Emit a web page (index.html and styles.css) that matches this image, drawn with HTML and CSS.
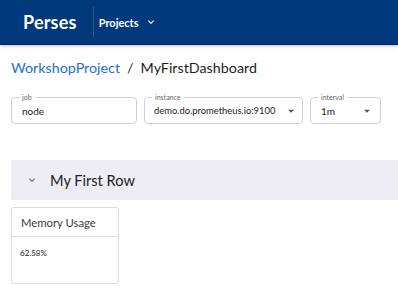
FILE: index.html
```html
<!DOCTYPE html>
<html>
<head>
<meta charset="utf-8">
<link rel="stylesheet" href="styles.css">
</head>
<body>
<header class="topbar">
  <div class="brand">Perses</div>
  <div class="divider"></div>
  <div class="projects">Projects
    <svg class="chev" viewBox="0 0 24 24" width="12" height="12"><path d="M7.41 8.59 12 13.17l4.59-4.58L18 10l-6 6-6-6z" fill="#fff"/></svg>
  </div>
</header>
<main class="content">
  <nav class="crumbs">
    <span class="crumb-link">WorkshopProject</span>
    <span class="sep">/</span>
    <span class="crumb-cur">MyFirstDashboard</span>
  </nav>
  <div class="vars">
    <div class="field f-job">
      <span class="flabel">job</span>
      <span class="fval">node</span>
    </div>
    <div class="field f-inst">
      <span class="flabel">instance</span>
      <span class="fval">demo.do.prometheus.io:9100</span>
      <svg class="caret" viewBox="0 0 24 24" width="14" height="14"><path d="M7 10l5 5 5-5z" fill="#555"/></svg>
    </div>
    <div class="field f-int">
      <span class="flabel">interval</span>
      <span class="fval">1m</span>
      <svg class="caret" viewBox="0 0 24 24" width="14" height="14"><path d="M7 10l5 5 5-5z" fill="#555"/></svg>
    </div>
  </div>
  <div class="row-head">
    <svg class="row-chev" viewBox="0 0 24 24" width="12" height="12"><path d="M7.41 8.59 12 13.17l4.59-4.58L18 10l-6 6-6-6z" fill="#666"/></svg>
    <span class="row-title">My First Row</span>
  </div>
  <div class="panel">
    <div class="panel-head">Memory Usage</div>
    <div class="panel-body">62.58%</div>
  </div>
</main>
</body>
</html>
```
FILE: styles.css
```css
* { box-sizing: border-box; }
html, body { margin: 0; padding: 0; background: #fff; }
body { font-family: Lato, "Noto Sans", sans-serif; color: #1c1c24; overflow: hidden; }

.topbar {
  height: 45px;
  background: #003a7b;
  border-bottom: 1px solid #14148a;
  box-shadow: 0 1px 3px rgba(0,0,0,0.25);
  display: flex;
  align-items: center;
  padding-left: 23px;
  color: #fff;
}
.brand { font-size: 18px; font-weight: 700; letter-spacing: 0.2px; }
.divider { width: 1px; height: 30px; background: #2f5a8e; margin-left: 16px; margin-right: 5px; }
.projects { font-size: 11px; font-weight: 700; display: flex; align-items: center; gap: 6px; }
.chev { display: block; }

.content { padding: 0 0 0 11px; }
.crumbs { display: flex; align-items: center; gap: 7px; margin-top: 12px; height: 20px; font-size: 14.3px; }
.crumb-link { color: #1e6fd0; }
.sep { color: #333; }
.crumb-cur { color: #1c1c24; }

.vars { display: flex; gap: 7px; margin-top: 20px; }
.field {
  position: relative;
  height: 27px;
  border: 1px solid #cfcfd4;
  border-radius: 4px;
  display: flex;
  align-items: center;
  padding-left: 10px;
  padding-right: 4px;
  font-size: 10px;
  color: #222;
}
.f-job { width: 126px; }
.f-inst { width: 159px; padding-left: 9px; }
.f-inst .fval { font-size: 9.4px; }
.f-int { width: 71px; padding-right: 6px; }
.fval { flex: 1; min-width: 0; white-space: nowrap; overflow: hidden; }
.flabel {
  position: absolute;
  top: -5px;
  left: 7px;
  background: #fff;
  padding: 0 3px;
  font-size: 7px;
  line-height: 8px;
  color: #666;
}
.caret { display: block; flex: none; }

.row-head {
  margin-top: 36px;
  height: 40px;
  background: #ededf3;
  display: flex;
  align-items: center;
  padding-left: 15px;
  gap: 12px;
}
.row-title { font-size: 14.6px; color: #1c1c24; }

.panel {
  margin-top: 7px;
  width: 108px;
  height: 77px;
  border: 1px solid #dcdce0;
  border-radius: 3px;
}
.panel-head {
  height: 29px;
  border-bottom: 1px solid #dcdce0;
  font-size: 11.3px;
  color: #3a3a3a;
  padding: 8px 0 0 9px;
}
.panel-body { font-size: 8px; padding: 11px 0 0 8px; color: #222; }
```
